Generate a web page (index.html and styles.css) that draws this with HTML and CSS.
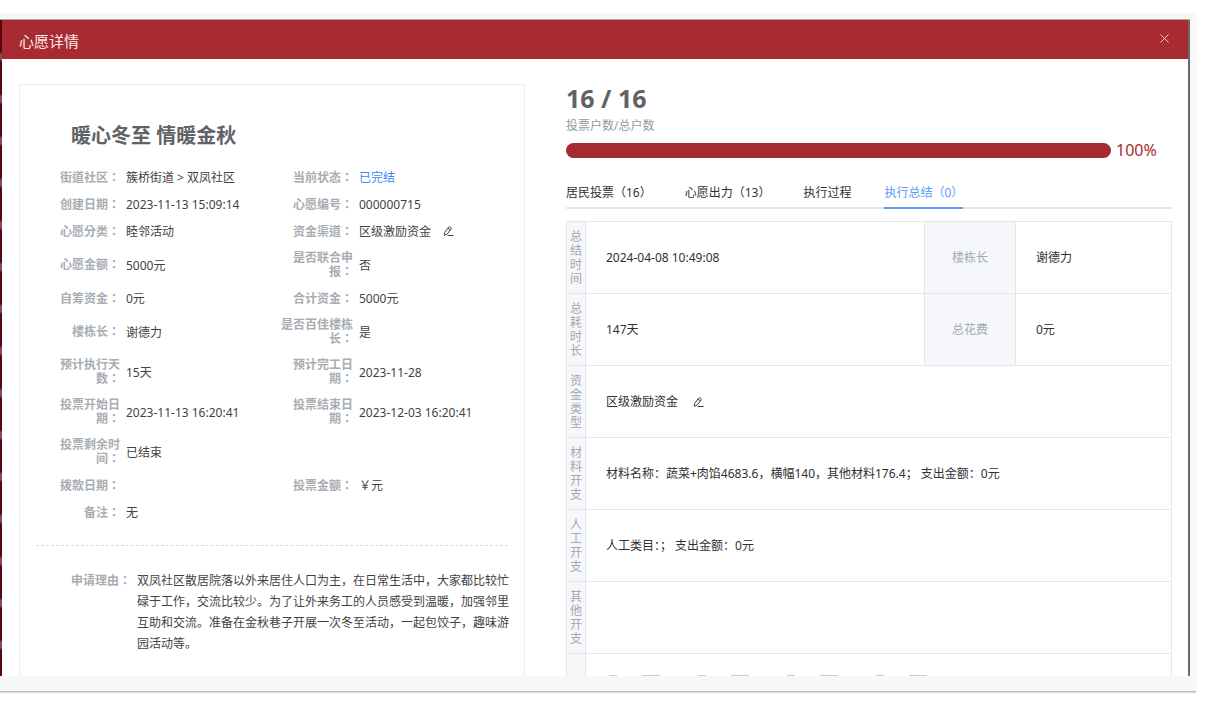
FILE: index.html
```html
<!DOCTYPE html>
<html lang="zh-CN">
<head>
  <meta charset="UTF-8" />
  <title>心愿详情</title>
  <link rel="stylesheet" href="styles.css">
</head>
<body>
  <div class="frame">
    <div class="backdrop">
      <div class="dialog">
        <header class="dialog-header">
          <h1>心愿详情</h1>
          <button class="close-btn" aria-label="关闭">
            <svg width="9" height="9" viewBox="0 0 9 9"><path d="M0.5 0.5L8.5 8.5M8.5 0.5L0.5 8.5" /></svg>
          </button>
        </header>

        <div class="dialog-body">
          <section class="card">
            <h2>暖心冬至 情暖金秋</h2>
            <dl class="info">
              <div class="item"><dt>街道社区：</dt><dd>簇桥街道 &gt; 双凤社区</dd></div>
              <div class="item"><dt>当前状态：</dt><dd class="status">已完结</dd></div>
              <div class="item"><dt>创建日期：</dt><dd>2023-11-13 15:09:14</dd></div>
              <div class="item"><dt>心愿编号：</dt><dd>000000715</dd></div>
              <div class="item"><dt>心愿分类：</dt><dd>睦邻活动</dd></div>
              <div class="item"><dt>资金渠道：</dt><dd>区级激励资金
                <button class="edit-btn" aria-label="编辑">
                  <svg width="11" height="11" viewBox="0 0 11 11"><path d="M1.2 9.3L1.7 6.4L5.6 1.2Q6.3 0.4 7.2 1L7.9 1.5Q8.7 2.2 8.1 3L4.2 8.1L1.2 9.3M5 2.2L7.3 3.9M4.6 9.5H10.6" /></svg>
                </button></dd></div>
              <div class="item"><dt>心愿金额：</dt><dd>5000元</dd></div>
              <div class="item"><dt>是否联合申报：</dt><dd>否</dd></div>
              <div class="item"><dt>自筹资金：</dt><dd>0元</dd></div>
              <div class="item"><dt>合计资金：</dt><dd>5000元</dd></div>
              <div class="item"><dt>楼栋长：</dt><dd>谢德力</dd></div>
              <div class="item"><dt>是否百佳楼栋长：</dt><dd>是</dd></div>
              <div class="item"><dt>预计执行天数：</dt><dd>15天</dd></div>
              <div class="item"><dt>预计完工日期：</dt><dd>2023-11-28</dd></div>
              <div class="item"><dt>投票开始日期：</dt><dd>2023-11-13 16:20:41</dd></div>
              <div class="item"><dt>投票结束日期：</dt><dd>2023-12-03 16:20:41</dd></div>
              <div class="item wide"><dt>投票剩余时间：</dt><dd>已结束</dd></div>
              <div class="item"><dt>拨款日期：</dt><dd></dd></div>
              <div class="item"><dt>投票金额：</dt><dd>￥元</dd></div>
              <div class="item wide"><dt>备注：</dt><dd>无</dd></div>
            </dl>
            <dl class="reason">
              <dt>申请理由：</dt>
              <dd>双凤社区散居院落以外来居住人口为主，在日常生活中，大家都比较忙碌于工作，交流比较少。为了让外来务工的人员感受到温暖，加强邻里互助和交流。准备在金秋巷子开展一次冬至活动，一起包饺子，趣味游园活动等。</dd>
            </dl>
          </section>

          <section class="result">
            <div class="count">16 / 16</div>
            <div class="count-label">投票户数/总户数</div>
            <div class="progress">
              <div class="track"><div class="bar" style="width: 100%"></div></div>
              <span>100%</span>
            </div>

            <nav class="tabs">
              <a href="#">居民投票（16）</a>
              <a href="#">心愿出力（13）</a>
              <a href="#">执行过程</a>
              <a href="#" class="active">执行总结（0）</a>
            </nav>

            <table class="summary">
              <colgroup><col class="col-name"><col><col class="col-sub"><col class="col-value"></colgroup>
              <tr><th>总结时间</th><td>2024-04-08 10:49:08</td><th>楼栋长</th><td>谢德力</td></tr>
              <tr><th>总耗时长</th><td>147天</td><th>总花费</th><td>0元</td></tr>
              <tr><th>资金类型</th><td colspan="3">区级激励资金
                <button class="edit-btn" aria-label="编辑">
                  <svg width="11" height="11" viewBox="0 0 11 11"><path d="M1.2 9.3L1.7 6.4L5.6 1.2Q6.3 0.4 7.2 1L7.9 1.5Q8.7 2.2 8.1 3L4.2 8.1L1.2 9.3M5 2.2L7.3 3.9M4.6 9.5H10.6" /></svg>
                </button></td></tr>
              <tr><th>材料开支</th><td colspan="3">材料名称：蔬菜+肉馅4683.6，横幅140，其他材料176.4； 支出金额：0元</td></tr>
              <tr><th>人工开支</th><td colspan="3">人工类目：； 支出金额：0元</td></tr>
              <tr><th>其他开支</th><td colspan="3"></td></tr>
              <tr><th></th><td colspan="3" class="files">
                <div class="file-list">
                  <i></i><i></i><i></i><i></i>
                </div>
              </td></tr>
            </table>
          </section>
        </div>
      </div>
    </div>
  </div>
</body>
</html>
```
FILE: styles.css
```css
* {
  box-sizing: border-box;
}
body {
  margin: 0;
  height: 100vh;
  padding: 13px 13px 13px 0;
  background: #fff;
  color: #463f3f;
  font-family: "Noto Sans", "Noto Sans CJK SC", sans-serif;
  font-size: 12px;
  line-height: 15px;
  overflow: hidden;
}
h1, h2, dl, dd {
  margin: 0;
}
button {
  padding: 0;
  border: none;
  background: none;
  cursor: pointer;
}
svg {
  display: block;
  fill: none;
  stroke: currentColor;
}

/* outer frame */
.frame {
  height: 100%;
  padding: 6px 6px 15px 0;
  background: #f7f8f5;
  border-bottom: 1px solid #bbb;
  box-shadow: 0 1px 1px #ddd;
}
.backdrop {
  height: 100%;
  padding: 0 2px;
  border-top: 1px solid #b9a5a0;
  background:
    linear-gradient(#6b6b6b, #6b6b6b) right / 2px 100% no-repeat,
    repeating-linear-gradient(#56060f 0, #56060f 32px, #7d5056 34px, #7d5056 40px, #56060f 42px);
}
.dialog {
  height: 100%;
  display: flex;
  flex-direction: column;
  background: #fff;
  overflow: hidden;
}
.dialog-header {
  flex: none;
  height: 39px;
  padding: 0 19px 0 17px;
  display: flex;
  align-items: center;
  justify-content: space-between;
  background: #a82b31;
  color: #fbeaea;
}
.dialog-header h1 {
  font-size: 15px;
  font-weight: 400;
  line-height: 20px;
  padding-top: 3px;
}
.close-btn {
  padding-bottom: 2px;
  color: #f0cccc;
}
.dialog-body {
  flex: 1;
  min-height: 0;
  padding: 25px 16px 0 17px;
  display: grid;
  grid-template-columns: 506fr 606fr;
  gap: 41px;
}

/* left card */
.card {
  padding: 37px 16px;
  border: 1px solid #ebebed;
}
.card h2 {
  padding-left: 35px;
  margin-bottom: 14px;
  color: #606266;
  font-size: 20px;
  line-height: 28px;
}
.info {
  display: grid;
  grid-template-columns: 233px 1fr;
  padding: 0 0 19px 12px;
  border-bottom: 1px dashed #dcdcdc;
}
.item {
  display: flex;
  align-items: center;
  gap: 6px;
  padding: 6px 0;
}
.wide {
  grid-column: span 2;
}
dt {
  flex: none;
  width: 72px;
  color: #a8adb3;
  /* keeps the full-width colon in the middle of its cell */
  font-family: "Noto Sans", "Noto Sans CJK TC", sans-serif;
  font-feature-settings: "locl" 0;
  font-weight: 700;
  line-height: 14px;
  text-align: right;
}
dd {
  display: flex;
  align-items: center;
  min-height: 15px;
}
.status {
  color: #3f83f8;
}
.edit-btn {
  margin-left: 12px;
  color: #463f3f;
}
.reason {
  display: flex;
  gap: 6px;
  margin-right: -4px;
  padding: 24px 0 0 23px;
}
.reason dt {
  line-height: 21px;
}
.reason dd {
  display: block;
  line-height: 21px;
}

/* right side */
.count {
  color: #606266;
  font-size: 25px;
  font-weight: 700;
  line-height: 28px;
}
.count-label {
  margin-top: 6px;
  color: #999;
}
.progress {
  display: flex;
  align-items: center;
  gap: 5px;
  margin-top: 8px;
  color: #a42c30;
  font-size: 16px;
  line-height: 18px;
}
.progress span {
  width: 56px;
}
.track {
  flex: 1;
  height: 15px;
  border-radius: 8px;
  background: #ebeef5;
}
.bar {
  height: 100%;
  border-radius: 8px;
  background: #a42c30;
}
.tabs {
  display: flex;
  gap: 33px;
  margin: 18px 0 12px;
  box-shadow: inset 0 -2px #e4e7ed;
}
.tabs a {
  padding: 8px 0 7px;
  border-bottom: 2px solid transparent;
  color: #303133;
  text-decoration: none;
}
.tabs a.active {
  border-color: #5a9cf8;
  color: #5a9cf8;
}
.summary {
  width: 100%;
  table-layout: fixed;
  border-collapse: collapse;
}
.col-name {
  width: 19px;
}
.col-sub {
  width: 91px;
}
.col-value {
  width: 156px;
}
.summary th, .summary td {
  height: 72px;
  border: 1px solid #e4e6ea;
}
.summary th {
  padding: 0 3px;
  background: #f5f7fa;
  color: #a3a9b0;
  font-weight: 400;
  line-height: 14px;
}
.summary td {
  padding: 0 20px;
  color: #303133;
}
.summary .edit-btn {
  display: inline-block;
  vertical-align: middle;
}
.summary .files {
  vertical-align: top;
  padding-top: 21px;
}
.file-list {
  display: flex;
  gap: 38px;
  padding-left: 3px;
}
.file-list i {
  width: 51px;
  height: 20px;
  background: linear-gradient(to right, #ccc 8px, #fff 8px, #fff 33px, #ccc 33px) top / 100% 1px no-repeat;
}
```
